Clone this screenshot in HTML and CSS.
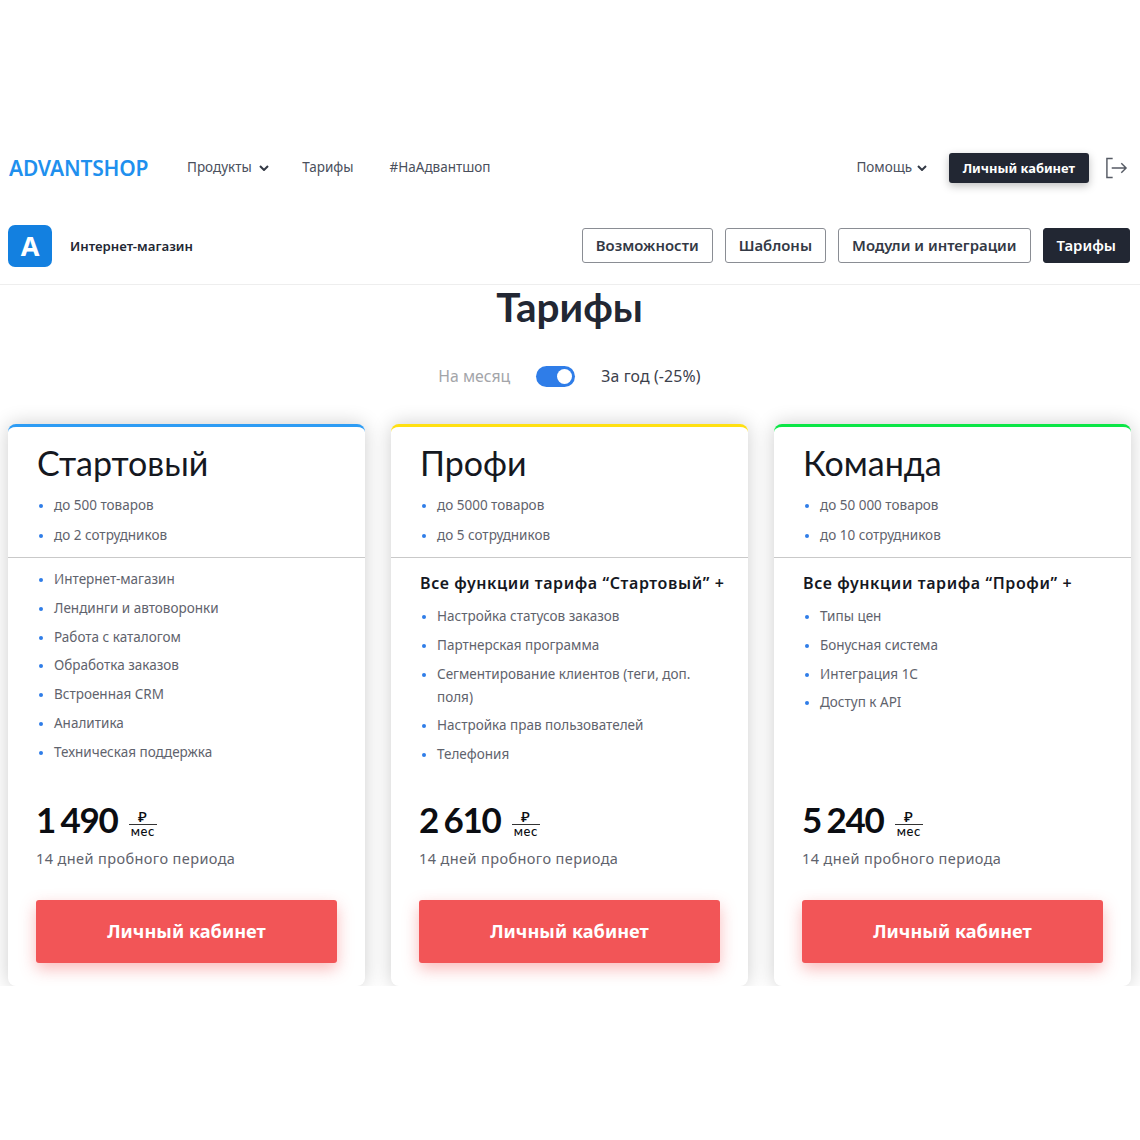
FILE: index.html
```html
<!DOCTYPE html>
<html lang="ru">

<head>
    <meta charset="UTF-8">
    <meta name="viewport" content="width=device-width, initial-scale=1.0">
    <title>Тарифы</title>
    <link rel="stylesheet" href="styles.css">
</head>

<body>
    <div class="topbar">
        <a class="logo">ADVANTSHOP</a>
        <nav class="menu">
            <a class="has-arrow">Продукты <svg class="arrow" viewBox="0 0 10 6"><path d="M1 1l4 4 4-4"/></svg></a>
            <a>Тарифы</a>
            <a>#НаАдвантшоп</a>
        </nav>
        <div class="topbar-right">
            <a class="help">Помощь <svg class="arrow" viewBox="0 0 10 6"><path d="M1 1l4 4 4-4"/></svg></a>
            <a class="btn-dark btn-cabinet">Личный кабинет</a>
            <svg class="logout" viewBox="0 0 24 22"><path d="M8 1H2v20h6"/><path d="M7 11h15M17 6l5 5-5 5"/></svg>
        </div>
    </div>

    <div class="subbar">
        <div class="product">
            <span class="product-icon">A</span>
            <span class="product-name">Интернет-магазин</span>
        </div>
        <div class="tabs">
            <a class="tab">Возможности</a>
            <a class="tab">Шаблоны</a>
            <a class="tab">Модули и интеграции</a>
            <a class="tab active">Тарифы</a>
        </div>
    </div>

    <section class="pricing">
        <h1>Тарифы</h1>
        <div class="period">
            <span class="period-off">На месяц</span>
            <span class="toggle"><span class="toggle-knob"></span></span>
            <span class="period-on">За год (-25%)</span>
        </div>

        <div class="cards">
            <div class="card card-blue">
                <div class="card-head">
                    <h2>Стартовый</h2>
                    <ul class="list">
                        <li>до 500 товаров</li>
                        <li>до 2 сотрудников</li>
                    </ul>
                </div>
                <div class="card-body">
                    <ul class="list">
                        <li>Интернет-магазин</li>
                        <li>Лендинги и автоворонки</li>
                        <li>Работа с каталогом</li>
                        <li>Обработка заказов</li>
                        <li>Встроенная CRM</li>
                        <li>Аналитика</li>
                        <li>Техническая поддержка</li>
                    </ul>
                </div>
                <div class="card-foot">
                    <div class="price">1 490 <span class="unit"><span class="unit-top">₽</span><span class="unit-bottom">мес</span></span></div>
                    <p class="trial">14 дней пробного периода</p>
                    <a class="btn-red">Личный кабинет</a>
                </div>
            </div>

            <div class="card card-yellow">
                <div class="card-head">
                    <h2>Профи</h2>
                    <ul class="list">
                        <li>до 5000 товаров</li>
                        <li>до 5 сотрудников</li>
                    </ul>
                </div>
                <div class="card-body">
                    <h3>Все функции тарифа “Стартовый” +</h3>
                    <ul class="list list-wide">
                        <li>Настройка статусов заказов</li>
                        <li>Партнерская программа</li>
                        <li>Сегментирование клиентов (теги, доп. поля)</li>
                        <li>Настройка прав пользователей</li>
                        <li>Телефония</li>
                    </ul>
                </div>
                <div class="card-foot">
                    <div class="price">2 610 <span class="unit"><span class="unit-top">₽</span><span class="unit-bottom">мес</span></span></div>
                    <p class="trial">14 дней пробного периода</p>
                    <a class="btn-red">Личный кабинет</a>
                </div>
            </div>

            <div class="card card-green">
                <div class="card-head">
                    <h2>Команда</h2>
                    <ul class="list">
                        <li>до 50 000 товаров</li>
                        <li>до 10 сотрудников</li>
                    </ul>
                </div>
                <div class="card-body">
                    <h3>Все функции тарифа “Профи” +</h3>
                    <ul class="list list-wide">
                        <li>Типы цен</li>
                        <li>Бонусная система</li>
                        <li>Интеграция 1С</li>
                        <li>Доступ к API</li>
                    </ul>
                </div>
                <div class="card-foot">
                    <div class="price">5 240 <span class="unit"><span class="unit-top">₽</span><span class="unit-bottom">мес</span></span></div>
                    <p class="trial">14 дней пробного периода</p>
                    <a class="btn-red">Личный кабинет</a>
                </div>
            </div>
        </div>
    </section>
</body>

</html>
```

FILE: styles.css
```css
body {
    font-family: "Noto Sans", Arial, sans-serif;
    background-color: #fff;
    color: #222733;
    margin: 0;
    padding: 140px 0 0;
}

/* top row */
.topbar {
    display: flex;
    align-items: center;
    height: 56px;
    padding: 0 12px 0 9px;
}

.logo {
    color: #1f90ee;
    font-size: 21px;
    font-weight: 600;
    letter-spacing: -0.2px;
    width: 178px;
}

.menu {
    display: flex;
    gap: 36px;
    font-size: 13.5px;
    color: #4a4f5c;
    padding-bottom: 2px;
}

.has-arrow {
    margin-right: -3px;
}

.arrow {
    width: 10px;
    height: 6px;
    margin-left: 4px;
    vertical-align: 1px;
    fill: none;
    stroke: #333945;
    stroke-width: 2;
}

.topbar-right {
    display: flex;
    align-items: center;
    margin-left: auto;
}

.help {
    font-size: 13.5px;
    color: #4a4f5c;
    margin-right: 22px;
    padding-bottom: 2px;
}

.help .arrow {
    margin-left: 1px;
}

.btn-dark {
    background-color: #222733;
    color: #fff;
    border-radius: 3px;
}

.btn-cabinet {
    font-size: 12.9px;
    font-weight: 700;
    line-height: 30px;
    padding: 0 14px;
    box-shadow: 0 3px 8px rgba(0, 0, 0, 0.25);
    margin-right: 16px;
}

.logout {
    width: 23px;
    height: 22px;
    fill: none;
    stroke: #555a64;
    stroke-width: 1.5;
}

/* second row */
.subbar {
    display: flex;
    align-items: center;
    justify-content: space-between;
    height: 89px;
    padding: 10px 10px 0 8px;
    border-bottom: 1px solid #eee;
    box-sizing: border-box;
}

.product {
    display: flex;
    align-items: center;
    gap: 18px;
    margin-top: 2px;
}

.product-icon {
    width: 44px;
    height: 42px;
    background-color: #1380e0;
    color: #fff;
    border-radius: 7px;
    font-size: 27px;
    font-weight: 700;
    line-height: 42px;
    text-align: center;
}

.product-name {
    font-size: 13.2px;
    font-weight: 600;
}

.tabs {
    display: flex;
    gap: 12px;
}

.tab {
    border: 1px solid #8a8d94;
    border-radius: 3px;
    font-size: 14.9px;
    font-weight: 600;
    line-height: 33px;
    padding: 0 13px;
    color: #333945;
}

.tab.active {
    background-color: #222733;
    border-color: #222733;
    color: #fff;
}

/* pricing */
.pricing {
    padding: 0 9px 0 8px;
}

h1 {
    font-family: Lato, "Noto Sans", sans-serif;
    font-size: 40.5px;
    font-weight: 700;
    line-height: 44px;
    text-align: center;
    margin: 0;
}

.period {
    display: flex;
    justify-content: center;
    align-items: center;
    gap: 26px;
    font-size: 15.8px;
    height: 24px;
    margin-top: 35px;
}

.period-off {
    color: #a3a5a9;
}

.period-on {
    color: #3c414c;
    letter-spacing: 0.15px;
}

.toggle {
    display: flex;
    justify-content: flex-end;
    align-items: center;
    width: 39px;
    height: 21px;
    padding: 0 3px;
    box-sizing: border-box;
    background-color: #2f7de8;
    border-radius: 11px;
}

.toggle-knob {
    width: 15px;
    height: 15px;
    background-color: #fff;
    border-radius: 50%;
}

/* the screenshot cuts the cards' shadow off right under them */
.cards {
    display: grid;
    grid-template-columns: repeat(3, 357px);
    justify-content: space-between;
    margin-top: 36px;
    clip-path: inset(-40px -40px -1px -40px);
}

.card {
    display: flex;
    flex-direction: column;
    height: 562px;
    box-sizing: border-box;
    background-color: #fff;
    border-top: 3px solid #2d9cf4;
    border-radius: 8px;
    box-shadow: 0 0 20px rgba(0, 0, 0, 0.2);
}

.card-yellow {
    border-top-color: #ffe011;
}

.card-green {
    border-top-color: #0be646;
}

.card-head {
    height: 131px;
    padding: 15px 29px 0;
    box-sizing: border-box;
    border-bottom: 1px solid #c9c9c9;
}

h2 {
    font-family: Lato, "Noto Sans", sans-serif;
    font-size: 34px;
    font-weight: 400;
    line-height: 42px;
    color: #15181f;
    margin: 0 0 10px;
}

.list {
    list-style: none;
    margin: 0;
    padding: 0;
    font-size: 13.5px;
    line-height: 23px;
    color: #5f636d;
}

.list li {
    display: flex;
    gap: 11px;
    margin-bottom: 5.8px;
}

.card-head .list li {
    margin-bottom: 6.5px;
}

.list li::before {
    content: "";
    flex: none;
    width: 4px;
    height: 4px;
    margin: 10px 0 0 2px;
    background-color: #2f7de8;
    border-radius: 50%;
}

.list-wide {
    width: 276px;
}

.card-body {
    flex: 1;
    padding: 10px 29px 0;
}

h3 {
    font-size: 16px;
    font-weight: 600;
    letter-spacing: 0.6px;
    line-height: 24px;
    color: #15181f;
    margin: 3px 0 10px;
    white-space: nowrap;
}

.card-foot {
    padding: 0 28px 23px;
}

.price {
    display: flex;
    align-items: center;
    gap: 11px;
    font-family: Lato, "Noto Sans", sans-serif;
    font-size: 35px;
    font-weight: 700;
    letter-spacing: -1.2px;
    line-height: 40px;
    color: #0b0d12;
    word-spacing: -2px;
}

.unit {
    display: flex;
    flex-direction: column;
    width: 28px;
    font-size: 13px;
    font-weight: 500;
    letter-spacing: 0.6px;
    line-height: 16px;
    text-align: center;
    word-spacing: 0;
    margin-top: 6px;
}

.unit-top {
    font-size: 15px;
    border-bottom: 1px solid #333;
}

.unit-bottom {
    line-height: 12px;
}

.trial {
    font-size: 14.5px;
    letter-spacing: 0.4px;
    line-height: 20px;
    color: #5f636d;
    margin: 9px 0 32px;
}

.btn-red {
    display: block;
    background-color: #f25557;
    color: #fff;
    border-radius: 3px;
    font-size: 18.2px;
    font-weight: 700;
    line-height: 63px;
    text-align: center;
    box-shadow: 0 6px 16px rgba(242, 85, 87, 0.4);
}
```
